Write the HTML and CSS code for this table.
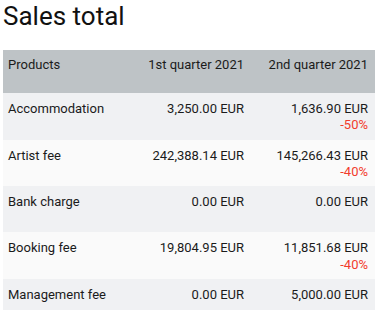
FILE: index.html
```html
<!DOCTYPE html>
<html>
<head>
<meta charset="utf-8">
<link rel="stylesheet" href="styles.css">
</head>
<body>
<h1 class="title">Sales total</h1>
<table class="sales">
  <colgroup><col class="c"><col class="c"><col class="c"></colgroup>
  <thead>
    <tr><th class="name">Products</th><th class="num">1st quarter 2021</th><th class="num">2nd quarter 2021</th></tr>
  </thead>
  <tbody>
    <tr class="odd"><td class="name">Accommodation</td><td class="num">3,250.00 EUR</td><td class="num">1,636.90 EUR<div class="delta">-50%</div></td></tr>
    <tr class="even"><td class="name">Artist fee</td><td class="num">242,388.14 EUR</td><td class="num">145,266.43 EUR<div class="delta">-40%</div></td></tr>
    <tr class="odd"><td class="name">Bank charge</td><td class="num">0.00 EUR</td><td class="num">0.00 EUR</td></tr>
    <tr class="even"><td class="name">Booking fee</td><td class="num">19,804.95 EUR</td><td class="num">11,851.68 EUR<div class="delta">-40%</div></td></tr>
    <tr class="odd"><td class="name">Management fee</td><td class="num">0.00 EUR</td><td class="num">5,000.00 EUR</td></tr>
  </tbody>
</table>
</body>
</html>
```
FILE: styles.css
```css
html, body { margin: 0; padding: 0; background: #fff; }
body { padding: 0 3px; font-family: Roboto, "Liberation Sans", sans-serif; color: #1b1b1b; }
.title { margin: 0; padding-top: 1px; height: 50px; box-sizing: border-box; font-size: 26px; font-weight: 400; line-height: 30px; color: #111; }
.sales { width: 372px; border-collapse: collapse; table-layout: fixed; font-size: 13px; line-height: 16.2px; }
.sales th { font-weight: 400; background: #bec3c6; height: 43px; box-sizing: border-box; padding: 7px 7px 20px 5px; vertical-align: top; }
.sales td { vertical-align: top; padding: 8px 7px 22.2px 5px; }
.sales tr.odd td { background: #f0f1f3; }
.sales tr.even td { background: #fafafa; }
.sales tr td .delta { color: #f23c2c; }
.name { text-align: left; }
.num { text-align: right; }
.sales td:has(.delta) { padding-bottom: 6px; }
```
